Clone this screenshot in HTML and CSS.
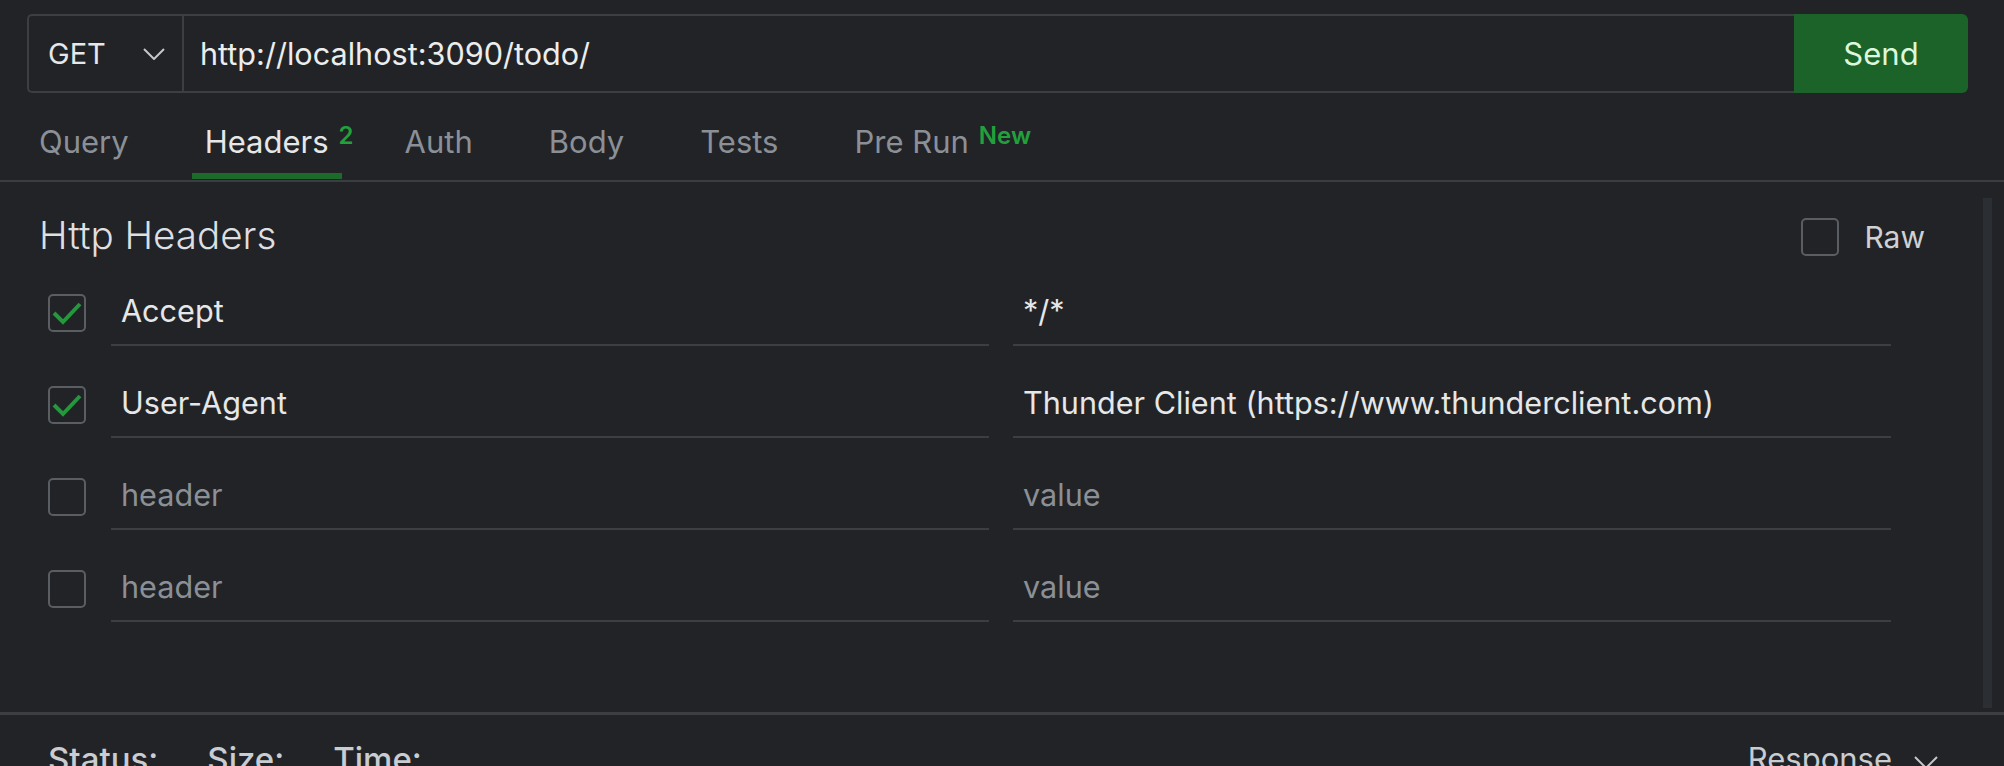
FILE: index.html
```html
<!DOCTYPE html>
<html lang="en">
<head>
<meta charset="utf-8">
<title>Thunder Client - Request</title>
<link rel="stylesheet" href="styles.css">
</head>
<body>
<div class="app">
  <div class="urlbar">
    <div class="url-group">
      <div class="method">
        <span class="method-name">GET</span>
        <svg class="chevron" width="22" height="12" viewBox="0 0 22 12"><path d="M1 1 L11 11 L21 1" fill="none" stroke="#c4c6c8" stroke-width="2"/></svg>
      </div>
      <div class="url">http://localhost:3090/todo/</div>
    </div>
    <button class="send">Send</button>
  </div>

  <nav class="tabs">
    <div class="tab">Query</div>
    <div class="tab active">Headers<span class="badge">2</span></div>
    <div class="tab">Auth</div>
    <div class="tab">Body</div>
    <div class="tab">Tests</div>
    <div class="tab">Pre Run<span class="badge">New</span></div>
  </nav>

  <section class="panel">
    <div class="title-row">
      <h2 class="title">Http Headers</h2>
      <label class="raw"><span class="box"></span><span class="raw-label">Raw</span></label>
    </div>

    <div class="row">
      <span class="box checked"><svg width="34" height="34" viewBox="0 0 34 34"><path d="M4 17 L13 26 L30 8" fill="none" stroke="#22993a" stroke-width="4"/></svg></span>
      <div class="fields">
        <div class="field">Accept</div>
        <div class="field">*/*</div>
      </div>
    </div>
    <div class="row">
      <span class="box checked"><svg width="34" height="34" viewBox="0 0 34 34"><path d="M4 17 L13 26 L30 8" fill="none" stroke="#22993a" stroke-width="4"/></svg></span>
      <div class="fields">
        <div class="field">User-Agent</div>
        <div class="field">Thunder Client (https://www.thunderclient.com)</div>
      </div>
    </div>
    <div class="row">
      <span class="box"></span>
      <div class="fields">
        <div class="field placeholder">header</div>
        <div class="field placeholder">value</div>
      </div>
    </div>
    <div class="row">
      <span class="box"></span>
      <div class="fields">
        <div class="field placeholder">header</div>
        <div class="field placeholder">value</div>
      </div>
    </div>

    <div class="scrollbar"></div>
  </section>

  <footer class="status">
    <div class="stats">
      <span>Status:</span>
      <span>Size:</span>
      <span>Time:</span>
    </div>
    <div class="response">
      <span>Response</span>
      <svg class="chevron" width="24" height="13" viewBox="0 0 24 13"><path d="M1 1 L12 12 L23 1" fill="none" stroke="#c4c6c8" stroke-width="2"/></svg>
    </div>
  </footer>
</div>
</body>
</html>
```

FILE: styles.css
```css
* { box-sizing: border-box; }

html, body {
  margin: 0;
  padding: 0;
  background: #212327;
  height: 100%;
  overflow: hidden;
}

body {
  font-family: Inter, Roboto, "Liberation Sans", sans-serif;
  color: #e6e7e8;
}

.app {
  width: 2004px;
  height: 766px;
  display: flex;
  flex-direction: column;
  overflow: hidden;
}

.app > * { flex: none; }

/* URL bar */
.urlbar {
  display: flex;
  height: 79px;
  margin: 14px 36px 0 27px;
}

.url-group {
  flex: 1;
  display: flex;
  border: 2px solid #3b3e42;
  border-right: none;
  border-radius: 5px 0 0 5px;
}

.method {
  width: 155px;
  border-right: 2px solid #3b3e42;
  display: flex;
  align-items: center;
  justify-content: space-between;
  padding: 0 17px 0 19px;
  font-size: 29px;
  color: #e6e7e8;
}

.url {
  display: flex;
  align-items: center;
  padding-left: 16px;
  font-size: 30.6px;
  color: #eceded;
}

.send {
  width: 174px;
  height: 79px;
  border: none;
  border-radius: 0 6px 6px 0;
  background: #1b6329;
  color: #dcf7dc;
  font-family: Inter, Roboto, "Liberation Sans", sans-serif;
  font-size: 31px;
  padding: 0;
}

/* Tabs */
.tabs {
  display: flex;
  gap: 50px;
  padding-left: 26px;
  border-bottom: 2px solid #3a3d41;
  height: 89px;
}

.tab {
  position: relative;
  padding: 29px 13px 0;
  font-size: 31px;
  line-height: 40px;
  color: #8b9096;
  border-bottom: 6px solid transparent;
  margin-bottom: 1px;
}

.tab.active {
  color: #e6e7e8;
  border-bottom-color: #1c6b2b;
}

.badge {
  position: absolute;
  left: calc(100% - 3px);
  top: 30px;
  font-size: 24px;
  line-height: 26px;
  font-weight: 600;
  color: #22a03c;
  white-space: nowrap;
}

/* Panel */
.panel {
  position: relative;
  height: 530px;
  padding: 36px 113px 0 39px;
}

.title-row {
  display: flex;
  justify-content: space-between;
  align-items: center;
  height: 38px;
  margin-right: -34px;
  margin-bottom: 24px;
}

.title {
  margin: 0 0 4px;
  font-size: 38.6px;
  font-weight: 300;
  color: #dedfe0;
}

.raw {
  display: flex;
  align-items: center;
  gap: 25px;
}

.raw-label {
  font-size: 30px;
  color: #cfd1d3;
}

.box {
  width: 38px;
  height: 38px;
  border: 2px solid #5a5d61;
  border-radius: 5px;
  display: flex;
  align-items: center;
  justify-content: center;
  flex: none;
}

.row {
  display: flex;
  align-items: center;
  gap: 25px;
  margin-left: 9px;
  height: 66px;
  margin-bottom: 26px;
}

.fields {
  flex: 1;
  display: flex;
  gap: 24px;
  height: 100%;
}

.field {
  flex: 1;
  display: flex;
  align-items: center;
  padding: 0 0 4px 10px;
  border-bottom: 2px solid #3b3e42;
  font-size: 30.6px;
  color: #e6e7e8;
}

.field.placeholder {
  color: #8b9096;
}

.scrollbar {
  position: absolute;
  right: 12px;
  top: 16px;
  width: 9px;
  height: 510px;
  background: #2b2e32;
}

/* Status bar */
.status {
  border-top: 3px solid #3b3e42;
  display: flex;
  justify-content: space-between;
  padding: 24px 66px 0 48px;
  font-size: 31px;
  line-height: 40px;
  color: #c9ccd0;
}

.stats {
  display: flex;
  gap: 49px;
  font-size: 33px;
  font-weight: 500;
}

.response {
  display: flex;
  align-items: center;
  gap: 22px;
}

.response .chevron {
  margin-top: 6px;
}
```
